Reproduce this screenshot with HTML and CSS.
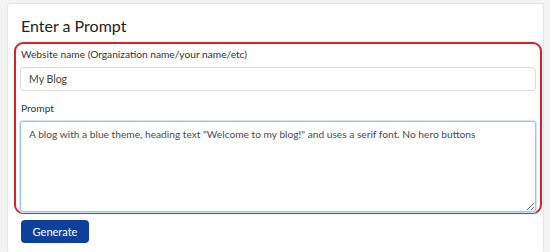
FILE: index.html
```html
<!DOCTYPE html>
<html lang="en">
<head>
  <meta charset="UTF-8" />
  <title>Enter a Prompt</title>
  <link rel="stylesheet" href="styles.css">
</head>
<body>
  <div class="card">
    <h2 class="card-title">Enter a Prompt</h2>
    <div class="prompt-box">
      <label class="field-label" for="siteName">Website name (Organization name/your name/etc)</label>
      <input class="field-input" id="siteName" type="text" value="My Blog" />
      <label class="field-label" for="prompt">Prompt</label>
      <textarea class="field-textarea" id="prompt">A blog with a blue theme, heading text "Welcome to my blog!" and uses a serif font. No hero buttons</textarea>
    </div>
    <button class="generate-btn">Generate</button>
  </div>
</body>
</html>
```

FILE: styles.css
```css
html {
  overflow: hidden;
}

body {
  margin: 0;
  padding: 3px 6px 0 7px;
  background: #f3f3f3;
  font-family: Lato, "Open Sans", sans-serif;
  color: #333;
}

.card {
  box-sizing: border-box;
  height: 250px;
  background: #fff;
  border: 1px solid #e6e6e6;
  border-radius: 3px;
  padding: 12px 1px 0 6px;
}

.card-title {
  margin: 0 0 6px 7px;
  font-size: 16px;
  font-weight: 400;
  line-height: 20px;
  color: #222;
}

.prompt-box {
  border: 2px solid #d6202a;
  border-radius: 9px;
  padding: 4px 4px 0 4px;
  display: flex;
  flex-direction: column;
}

.field-label {
  font-size: 10.2px;
  line-height: 13px;
  color: #333;
  margin: 0 0 6px 1px;
}

.field-input {
  height: 24px;
  box-sizing: border-box;
  border: 1px solid #dcdcdc;
  border-radius: 3px;
  padding: 0 8px;
  font-family: inherit;
  font-size: 10.5px;
  color: #444;
  margin-bottom: 11px;
}

.field-textarea {
  height: 91px;
  box-sizing: border-box;
  border: 1px solid #9cc4e4;
  box-shadow: 0 0 0 1px #d3e6f6;
  border-radius: 3px;
  padding: 6px 8px;
  font-family: inherit;
  font-size: 10.2px;
  line-height: 13px;
  color: #4a4a4a;
  resize: vertical;
  outline: none;
  margin: 0;
}

.generate-btn {
  margin: 6px 0 0 7px;
  width: 68px;
  height: 23px;
  background: #0b419b;
  color: #fff;
  border: none;
  border-radius: 4px;
  font-family: inherit;
  font-size: 11px;
  cursor: pointer;
}
```
